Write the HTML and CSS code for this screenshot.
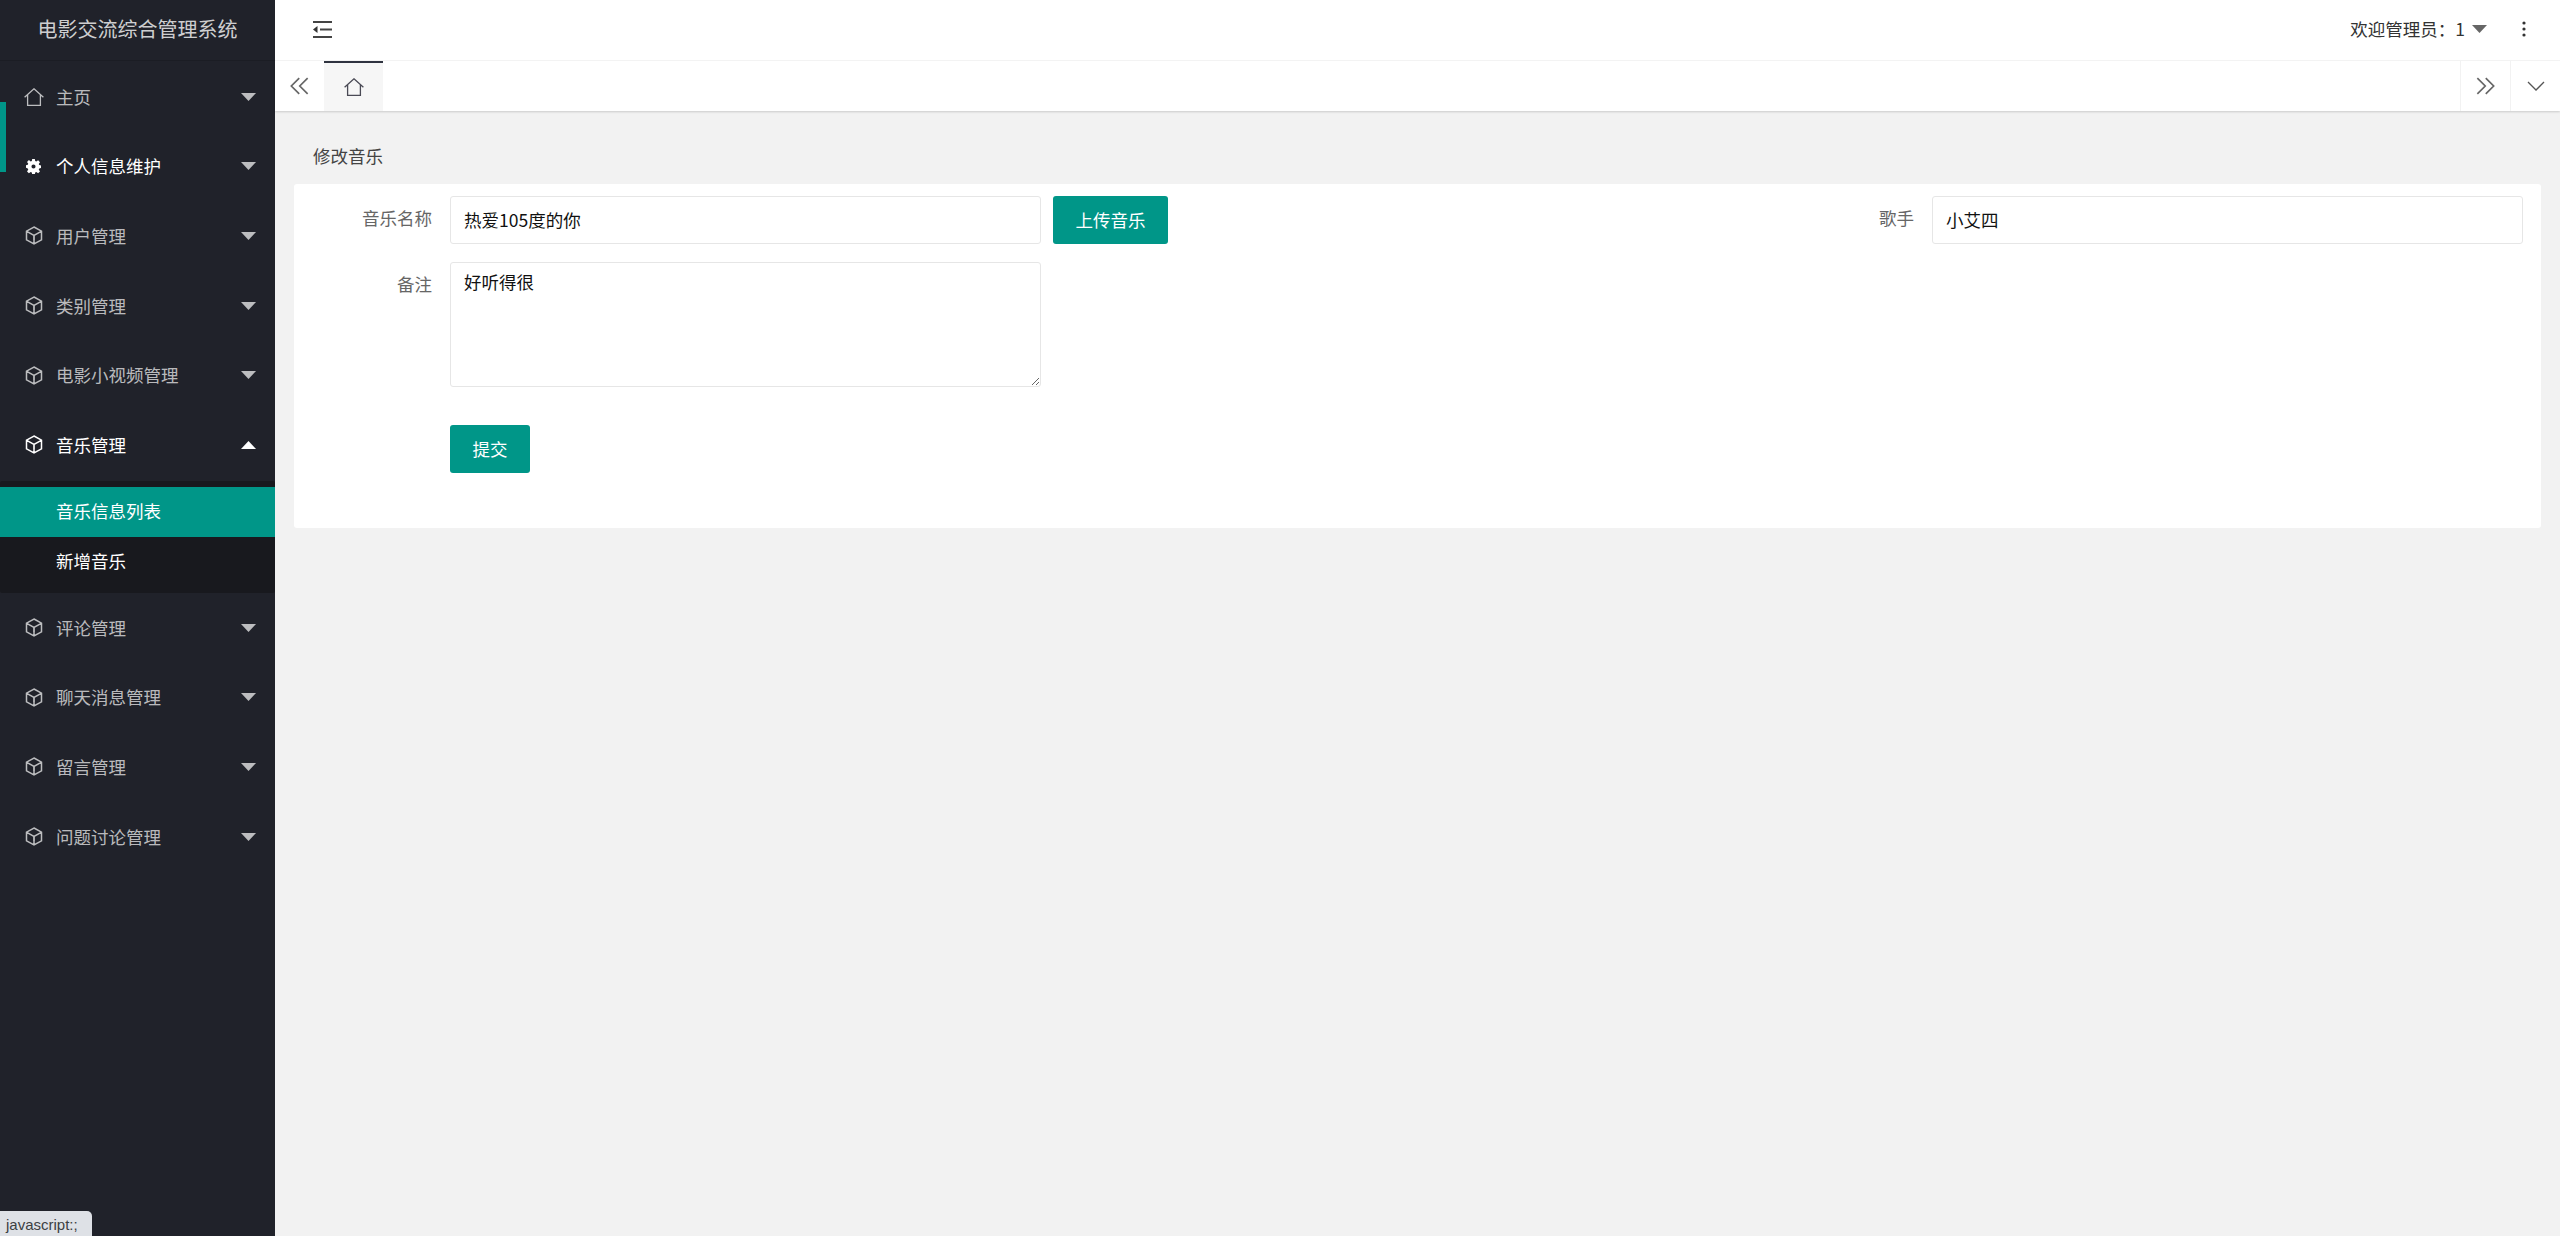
FILE: index.html
```html
<!DOCTYPE html>
<html lang="zh-CN">
<head>
<meta charset="utf-8">
<title>电影交流综合管理系统</title>
<link rel="stylesheet" href="styles.css">
</head>
<body>
<svg class="defs" width="0" height="0" aria-hidden="true">
  <defs>
    <symbol id="cube" viewBox="0 0 18 19"><path d="M9 1 16.500 5.200v8.600L9 18 1.500 13.800V5.200zM1.700 5.300 9 9.500l7.300-4.200M9 9.500V18" fill="none" stroke="currentColor" stroke-width="1.500"/><path d="M9 9.500V14" stroke="currentColor" stroke-width=".5"/></symbol>
    <symbol id="home" viewBox="0 0 20 18"><path d="M.6 9.200 10 .8l9.400 8.400M3.600 7v10.300h12.800V7" fill="none" stroke="currentColor" stroke-width="1.300"/></symbol>
    <symbol id="caret" viewBox="0 0 15 8"><path d="M0 0h15L7.500 8z" fill="currentColor"/></symbol>
  </defs>
</svg>
<div class="app">
  <aside class="side">
    <div class="logo">电影交流综合管理系统</div>
    <span class="side-mark"></span>
    <nav class="menu">
      <a class="item"><svg class="ico home-ico"><use href="#home"/></svg><span class="lbl">主页</span><svg class="caret"><use href="#caret"/></svg></a>
      <a class="item hot"><svg class="ico gear" viewBox="0 0 16 16"><path fill="currentColor" fill-rule="evenodd" d="M6.600 0h2.800l.4 2.200 1.200.5L12.900 1.400l2 2-1.300 1.900.5 1.200 1.900.4v2.800l-1.900.4-.5 1.200 1.300 1.900-2 2-1.900-1.300-1.200.5-.4 2.200H6.600l-.4-2.200-1.200-.5-1.900 1.300-2-2 1.300-1.900-.5-1.200L0 9.400V6.600l1.900-.4.500-1.200-1.300-1.900 2-2L5 2.700l1.200-.5zM8 5.800a2.200 2.200 0 1 0 0 4.400 2.200 2.200 0 0 0 0-4.400z"/></svg><span class="lbl">个人信息维护</span><svg class="caret"><use href="#caret"/></svg></a>
      <a class="item"><svg class="ico"><use href="#cube"/></svg><span class="lbl">用户管理</span><svg class="caret"><use href="#caret"/></svg></a>
      <a class="item"><svg class="ico"><use href="#cube"/></svg><span class="lbl">类别管理</span><svg class="caret"><use href="#caret"/></svg></a>
      <a class="item"><svg class="ico"><use href="#cube"/></svg><span class="lbl">电影小视频管理</span><svg class="caret"><use href="#caret"/></svg></a>
      <a class="item open"><svg class="ico"><use href="#cube"/></svg><span class="lbl">音乐管理</span><svg class="caret up"><use href="#caret"/></svg></a>
      <div class="sub">
        <a class="sub-item on">音乐信息列表</a>
        <a class="sub-item">新增音乐</a>
      </div>
      <a class="item"><svg class="ico"><use href="#cube"/></svg><span class="lbl">评论管理</span><svg class="caret"><use href="#caret"/></svg></a>
      <a class="item"><svg class="ico"><use href="#cube"/></svg><span class="lbl">聊天消息管理</span><svg class="caret"><use href="#caret"/></svg></a>
      <a class="item"><svg class="ico"><use href="#cube"/></svg><span class="lbl">留言管理</span><svg class="caret"><use href="#caret"/></svg></a>
      <a class="item"><svg class="ico"><use href="#cube"/></svg><span class="lbl">问题讨论管理</span><svg class="caret"><use href="#caret"/></svg></a>
    </nav>
  </aside>
  <div class="main">
    <header class="top">
      <svg class="burger" viewBox="0 0 20 17"><path d="M0 1h19M7 8.500h12M0 16h19" fill="none" stroke="#444" stroke-width="2"/><path d="M0 8.500 4.500 5v7z" fill="#333"/></svg>
      <div class="user">
        <span class="welcome">欢迎管理员：1</span>
        <svg class="caret dark"><use href="#caret"/></svg>
        <svg class="dots" viewBox="0 0 4 16"><circle cx="2" cy="2" r="1.600"/><circle cx="2" cy="8" r="1.600"/><circle cx="2" cy="14" r="1.600"/></svg>
      </div>
    </header>
    <div class="tabs">
      <span class="tab-btn first"><svg class="chev" viewBox="0.500 0 16.500 16"><path d="M8.500 1 1.500 8l7 7M16 1 9 8l7 7" fill="none" stroke="#666" stroke-width="1.500"/></svg></span>
      <span class="tab-home"><svg class="tab-ico"><use href="#home"/></svg></span>
      <span class="tab-fill"></span>
      <span class="tab-btn edge"><svg class="chev" viewBox="1 0 16.500 16"><path d="M2 1l7 7-7 7M9.500 1l7 7-7 7" fill="none" stroke="#666" stroke-width="1.500"/></svg></span>
      <span class="tab-btn edge"><svg class="down" viewBox="0 0 18 10"><path d="M1 1l8 8 8-8" fill="none" stroke="#555" stroke-width="1.300"/></svg></span>
    </div>
    <main class="body">
      <div class="crumb">修改音乐</div>
      <form class="card">
        <div class="row">
          <label class="field-label">音乐名称</label>
          <input class="input" type="text" value="热爱105度的你">
          <button class="btn upload" type="button">上传音乐</button>
          <label class="field-label right-label">歌手</label>
          <input class="input wide" type="text" value="小艾四">
        </div>
        <div class="row">
          <label class="field-label">备注</label>
          <textarea class="input area">好听得很</textarea>
        </div>
        <div class="row submit-row">
          <button class="btn submit" type="button">提交</button>
        </div>
      </form>
    </main>
  </div>
</div>
<div class="status">javascript:;</div>
</body>
</html>
```
FILE: styles.css
```css
* { box-sizing: border-box; }
html, body { margin: 0; height: 100%; overflow: hidden; }
body { font-family: "Noto Sans CJK SC", "Liberation Sans", sans-serif; font-size: 17.5px; color: #333; background: #f2f2f2; }
.defs { position: absolute; }
.app { display: flex; height: 1236px; }

.side { position: relative; width: 275px; flex: none; background: #20222a; color: rgba(255,255,255,.7); }
.logo { height: 61px; display: flex; align-items: center; justify-content: center; font-size: 20px; padding-bottom: 3px; border-bottom: 1px solid #1b1d24; color: rgba(255,255,255,.8); }
.side-mark { position: absolute; left: 0; top: 102px; width: 6px; height: 70px; background: #009688; }
.menu { padding-top: 1px; }
.item { display: flex; align-items: center; height: 69.6px; padding: 0 19px 0 25px; }
.ico { width: 18px; height: 19px; margin-right: 13px; flex: none; color: rgba(255,255,255,.7); }
.home-ico { width: 20px; height: 18px; margin-left: -1px; margin-right: 12px; }
.gear { width: 15px; height: 15px; margin-left: 1px; margin-right: 15px; }
.lbl { flex: 1; padding-bottom: 1px; }
.caret { width: 15px; height: 8px; flex: none; color: rgba(255,255,255,.7); }
.caret.up { transform: rotate(180deg); color: #fff; }
.hot, .open { color: #fff; }
.open .ico, .hot .ico { color: #fff; }
.sub { background: #18191e; padding: 6px 0; margin-top: 1.400px; border-radius: 2px; }
.sub-item { display: flex; align-items: center; height: 50px; padding: 0 0 3px 56px; color: #fff; }
.sub-item.on { background: #009688; }

.main { flex: 1; min-width: 0; display: flex; flex-direction: column; }
.top { height: 61px; background: #fff; border-bottom: 1px solid #f6f6f6; display: flex; align-items: center; justify-content: space-between; padding: 0 34px 0 38px; }
.burger { width: 20px; height: 17px; margin-bottom: 2px; }
.user { display: flex; align-items: center; color: #333; margin-bottom: 2px; }
.welcome { padding-bottom: 1px; }
.caret.dark { color: #666; margin-left: 7px; }
.dots { width: 4px; height: 16px; margin-left: 35px; fill: #333; }

.tabs { height: 50px; background: #fff; display: flex; align-items: stretch; box-shadow: 0 1px 2px rgba(0,0,0,.16); position: relative; }
.tab-btn { width: 50px; display: flex; align-items: center; justify-content: center; }
.tab-btn.first { width: 49px; }
.tab-btn.edge { border-left: 1px solid #f2f2f2; }
.chev { width: 19px; height: 18px; }
.down { width: 18px; height: 10px; }
.tab-home { width: 59px; background: #f6f6f6; border-top: 2px solid #2f3340; display: flex; align-items: center; justify-content: center; }
.tab-ico { width: 20px; height: 18px; color: #4a4a55; }
.tab-fill { flex: 1; }

.body { flex: 1; padding: 0 19px; background: #f2f2f2; }
.crumb { height: 73px; padding: 15px 19px 0; display: flex; align-items: center; color: #444; }
.card { height: 344px; background: #fff; border-radius: 3px; padding: 12px 18px 0 0; }
.row { display: flex; align-items: flex-start; margin-bottom: 18px; }
.field-label { width: 138px; margin-right: 18px; text-align: right; color: #666; line-height: 44px; flex: none; }
.input { width: 591px; height: 48px; flex: none; border: 1px solid #e6e6e6; border-radius: 3px; padding: 0 13px 1px; font: inherit; color: #111; background: #fff; outline: none; }
.area { height: 125px; padding: 6px 13px; line-height: 26px; display: block; }
.btn { border: 0; border-radius: 3px; background: #009688; color: #fff; font: inherit; height: 48px; padding: 0 0 2px; }
.upload { width: 115px; margin-left: 12px; }
.right-label { width: 138px; margin-left: auto; }
.wide { width: 591px; }
.submit-row { padding-left: 156px; margin-top: 38px; margin-bottom: 0; }
.submit { width: 80px; }

.status { position: absolute; left: 0; bottom: 0; width: 92px; height: 25px; background: #dee1e6; border-top-right-radius: 5px; color: #3c4043; font: 15px/27px "Liberation Sans", sans-serif; padding-left: 6px; }
```
